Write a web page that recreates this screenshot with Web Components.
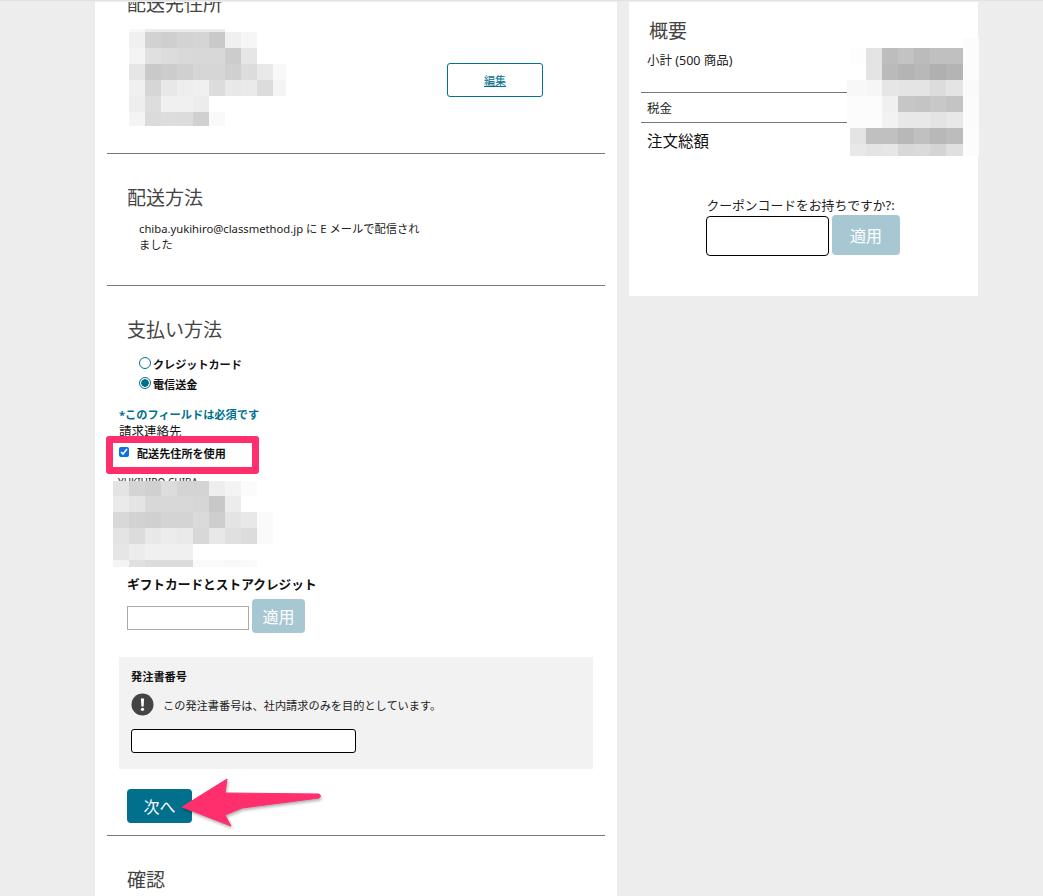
<!DOCTYPE html>
<html lang="ja">
<head>
<meta charset="utf-8">
<title>支払い方法</title>
<style>
  html, body { margin: 0; height: 896px; overflow: hidden; }
  body {
    background: #ededed;
    font-family: "Noto Sans", "Noto Sans CJK JP", sans-serif;
    color: #111;
  }
</style>
</head>
<body>
<checkout-page>
  <checkout-section first title="配送先住所">
    <div style="display:flex;align-items:flex-start">
      <pixel-block style="margin:2px 0 0 2px" cols="16 16 16 16 16 16 16 16 16 13" rows="3 16 16 16 16 16 14" cells="
        f8 ec ec ec ec ec ff ff ff ff
        f0 d2 cf d3 d5 c9 f0 f6 ff ff
        f4 e0 dc d9 d8 d8 cc e6 ff ff
        e6 c9 cc d0 d6 d6 d0 dc e9 f8
        f0 d6 e8 ee f0 dc e8 ea dc f4
        ee dd f0 f0 ec ff ff ff ff ff
        f4 db dd dc d0 f9 ff ff ff ff"></pixel-block>
      <edit-button style="margin:36px 62px 0 auto">編集</edit-button>
    </div>
  </checkout-section>

  <checkout-section title="配送方法">
    <p style="margin:0 0 0 12px;width:285px;font-size:11.25px;line-height:16px;color:#222">chiba.yukihiro@classmethod.jp に E メールで配信されました</p>
  </checkout-section>

  <checkout-section title="支払い方法" last>
    <payment-form></payment-form>
  </checkout-section>

  <checkout-section title="確認" tail></checkout-section>

  <order-summary slot="side"></order-summary>
</checkout-page>

<script>
const BASE = `
  * { box-sizing: border-box; }
  input { margin: 0; font: inherit; }
`;

class CheckoutPage extends HTMLElement {
  constructor() {
    super();
    this.attachShadow({ mode: 'open' });
    this.shadowRoot.innerHTML = `
      <style>
        ${BASE}
        :host { display: block; height: 896px; overflow: hidden; border-top: 1px solid #e2e2e2; }
        .wrap { display: flex; align-items: flex-start; gap: 12px; padding: 1px 0 0 95px; }
        main { display: block; width: 522px; height: 894px; background: #fff; overflow: hidden; }
        aside { display: block; width: 349px; }
      </style>
      <div class="wrap">
        <main><slot></slot></main>
        <aside><slot name="side"></slot></aside>
      </div>
    `;
  }
}

class CheckoutSection extends HTMLElement {
  constructor() {
    super();
    this.attachShadow({ mode: 'open' });
    this.shadowRoot.innerHTML = `
      <style>
        ${BASE}
        :host { display: block; margin: 0 12px; padding: 31px 0 32px 20px; border-bottom: 1px solid #777; }
        :host([first]) { margin-top: -42px; padding-bottom: 27px; }
        :host([last]) { padding-bottom: 12px; }
        :host([tail]) { border-bottom: 0; padding-top: 31px; }
        h2 { margin: 0 0 10px; font-size: 19px; line-height: 26px; font-weight: 400; color: #444; }
      </style>
      <h2></h2>
      <slot></slot>
    `;
  }
  connectedCallback() {
    this.shadowRoot.querySelector('h2').textContent = this.getAttribute('title');
    this.removeAttribute('title');
  }
}

// mosaic used to hide personal data in the screenshot, cells are grey levels
class PixelBlock extends HTMLElement {
  constructor() {
    super();
    this.attachShadow({ mode: 'open' });
  }
  connectedCallback() {
    const cols = this.getAttribute('cols').trim().split(/\s+/);
    const rows = this.getAttribute('rows').trim().split(/\s+/);
    const cells = this.getAttribute('cells').trim().split(/\s+/);
    const html = cells.map(c => {
      const bg = c === '-' ? 'transparent' : '#' + c + c + c;
      return `<i style="background:${bg}"></i>`;
    }).join('');
    this.shadowRoot.innerHTML = `
      <style>
        :host { display: grid; width: max-content;
          grid-template-columns: ${cols.map(c => c + 'px').join(' ')};
          grid-template-rows: ${rows.map(r => r + 'px').join(' ')}; }
        i { display: block; }
      </style>
      ${html}
    `;
  }
}

class EditButton extends HTMLElement {
  constructor() {
    super();
    this.attachShadow({ mode: 'open' });
    this.shadowRoot.innerHTML = `
      <style>
        ${BASE}
        :host { display: block; flex: none; }
        a { display: flex; align-items: center; justify-content: center; width: 96px; height: 34px;
          border: 1px solid #00708d; border-radius: 3px; color: #00708d; font-size: 11px; text-decoration: underline; }
      </style>
      <a href="#"><slot></slot></a>
    `;
  }
}

class ApplyButton extends HTMLElement {
  constructor() {
    super();
    this.attachShadow({ mode: 'open' });
    this.shadowRoot.innerHTML = `
      <style>
        ${BASE}
        :host { display: inline-flex; align-items: center; justify-content: center; flex: none;
          background: #a7c7d3; border-radius: 4px; color: #fff; font-size: 16px; }
      </style>
      <slot></slot>
    `;
  }
}

class PaymentForm extends HTMLElement {
  constructor() {
    super();
    this.attachShadow({ mode: 'open' });
    this.shadowRoot.innerHTML = `
      <style>
        ${BASE}
        :host { display: block; margin-left: -20px; padding-top: 1px; }
        .radios { margin-left: 32px; }
        .radio { display: flex; align-items: center; height: 20px; font-size: 11.1px; font-weight: 700; color: #111; }
        .radio input { appearance: none; width: 12px; height: 12px; margin: -2px 2px 0 0; border: 1px solid #00708d; border-radius: 50%; background: #fff; }
        .radio input:checked { background: radial-gradient(circle, #00708d 0 3.5px, #fff 4px); }
        .req { margin: 13px 0 0 12px; font-size: 11.2px; line-height: 16px; font-weight: 700; color: #00708d; }
        .bill { margin: 1px 0 0 12px; font-size: 12.5px; line-height: 16px; color: #111; }
        .mark { position: relative; margin: -4px 0 0 -1px; width: 153px; height: 38px;
          border: 7px solid #ff2f6e; border-radius: 3px; display: flex; align-items: center; padding: 0 0 5px 6px;
          font-size: 11.1px; font-weight: 700; background: #fff; }
        .mark input { width: 10px; height: 10px; margin: -2px 8px 0 0; accent-color: #0b6fe8; }
        .addr { position: relative; margin: 1px 0 0 6px; height: 92px; font-size: 10px; line-height: 14px; color: #222; padding-left: 5px; overflow: hidden; }
        .addr pixel-block { position: absolute; left: 0; top: 6px; }
        .gift-title { margin: 8px 0 0 20px; font-size: 12.7px; line-height: 18px; font-weight: 700; color: #111; }
        .gift { display: flex; align-items: flex-start; gap: 3px; margin: 6px 0 0 20px; }
        .gift input { width: 122px; height: 24px; margin-top: 7px; border: 1px solid #aaa; background: #fff; }
        .gift apply-button { width: 53px; height: 34px; }
        .po { margin: 24px 12px 0; padding: 12px; height: 112px; background: #f2f2f2; }
        .po b { display: block; font-size: 11.2px; line-height: 16px; color: #111; }
        .note { display: flex; align-items: center; gap: 9px; margin-top: 8px; font-size: 11.2px; color: #222; }
        .note svg { flex: none; }
        .po input { display: block; width: 225px; height: 24px; margin-top: 13px; border: 1px solid #000; border-radius: 3px; background: #fff; }
        .next { display: flex; align-items: center; justify-content: center; width: 65px; height: 34px; margin: 20px 0 0 20px;
          background: #00708d; border-radius: 4px; color: #fff; font-size: 16px; }
        .arrow { position: absolute; left: 170px; top: 770px; overflow: visible; filter: drop-shadow(1px 2px 1.5px rgba(0,0,0,.3)); }
      </style>
      <div class="radios">
        <label class="radio"><input type="radio" name="pay">クレジットカード</label>
        <label class="radio"><input type="radio" name="pay" checked>電信送金</label>
      </div>
      <div class="req">*このフィールドは必須です</div>
      <div class="bill">請求連絡先</div>
      <label class="mark"><input type="checkbox" checked>配送先住所を使用</label>
      <div class="addr">YUKIHIRO CHIBA
        <pixel-block cols="16 16 16 16 16 16 16 16 16 16" rows="15 16 16 16 16 7" cells="
          e4 d4 d0 dc d4 d4 ee f4 fb ff
          ea e4 d8 d8 d8 d6 c8 ec ff ff
          d8 d2 d0 d4 d4 da ce e4 e8 fa
          e4 dc e8 ec ea d8 e8 e0 dc fa
          e6 ec f0 f0 f0 ff ff ff ff ff
          f4 e0 dc dc dc fa fa f8 fa ff"></pixel-block>
      </div>
      <div class="gift-title">ギフトカードとストアクレジット</div>
      <div class="gift"><input type="text"><apply-button>適用</apply-button></div>
      <div class="po">
        <b>発注書番号</b>
        <div class="note">
          <svg width="23" height="23" viewBox="0 0 23 23"><circle cx="11.5" cy="11.5" r="11" fill="#444"/><path d="M9.9 5.5h3.2l-.5 8h-2.2z" fill="#fff"/><circle cx="11.5" cy="16.3" r="1.6" fill="#fff"/></svg>
          この発注書番号は、社内請求のみを目的としています。
        </div>
        <input type="text">
      </div>
      <div class="next">次へ</div>
      <svg class="arrow" width="160" height="60" viewBox="0 0 160 60"><path d="M12 37 57 9 55 23 149 24Q152 26 149 28L72 38 55 45 61 56Z" fill="#ff2f6e" stroke="#ff2f6e" stroke-linejoin="round"/></svg>
    `;
  }
}

class OrderSummary extends HTMLElement {
  constructor() {
    super();
    this.attachShadow({ mode: 'open' });
    this.shadowRoot.innerHTML = `
      <style>
        ${BASE}
        :host { display: block; position: relative; box-sizing: border-box; height: 294px; background: #fff; padding: 16px 0 0 12px; }
        h2 { margin: 0 0 0 8px; font-size: 19px; line-height: 26px; font-weight: 400; color: #444; }
        .row { padding-left: 6px; color: #222; font-size: 12.5px; }
        .sub { height: 49px; padding-top: 8px; border-bottom: 1px solid #777; line-height: 17px; }
        .tax { height: 30px; line-height: 31px; border-bottom: 1px solid #777; }
        .total { font-size: 15.5px; line-height: 36px; color: #111; }
        .coupon { margin: 38px 0 0 65px; width: 194px; }
        .coupon label { display: block; margin-bottom: 1px; padding-right: 5px; text-align: center; font-size: 12.8px; line-height: 17px; color: #222; white-space: nowrap; }
        .fields { display: flex; align-items: flex-start; gap: 3px; }
        .fields input { width: 123px; height: 40px; margin-top: 1px; border: 1px solid #000; border-radius: 4px; background: #fff; }
        .fields apply-button { width: 68px; height: 40px; }
        pixel-block { position: absolute; left: 218px; top: 36px; }
      </style>
      <h2>概要</h2>
      <div class="row sub">小計 (500 商品)</div>
      <div class="row tax">税金</div>
      <div class="row total">注文総額</div>
      <div class="coupon">
        <label>クーポンコードをお持ちですか?:</label>
        <div class="fields"><input type="text"><apply-button>適用</apply-button></div>
      </div>
      <pixel-block cols="3 16 16 16 16 16 16 17 16" rows="10 16 16 16 16 16 16 12" cells="
        - ff ff ff ff ff ff ff fc
        - fd e4 bd c3 bb c0 c0 fc
        - ff e4 ba b4 b8 b0 b4 fc
        f8 f8 f6 e6 e4 e4 dc e4 fa
        fc fc fc f0 c6 c4 c8 c4 fb
        fc fc fc f2 e8 e8 e4 e8 fb
        - e4 c0 c0 b8 c0 b8 bc fc
        - e8 e4 e6 d8 da d4 e0 fc"></pixel-block>
    `;
  }
}

customElements.define('checkout-page', CheckoutPage);
customElements.define('checkout-section', CheckoutSection);
customElements.define('pixel-block', PixelBlock);
customElements.define('edit-button', EditButton);
customElements.define('apply-button', ApplyButton);
customElements.define('payment-form', PaymentForm);
customElements.define('order-summary', OrderSummary);
</script>
</body>
</html>
